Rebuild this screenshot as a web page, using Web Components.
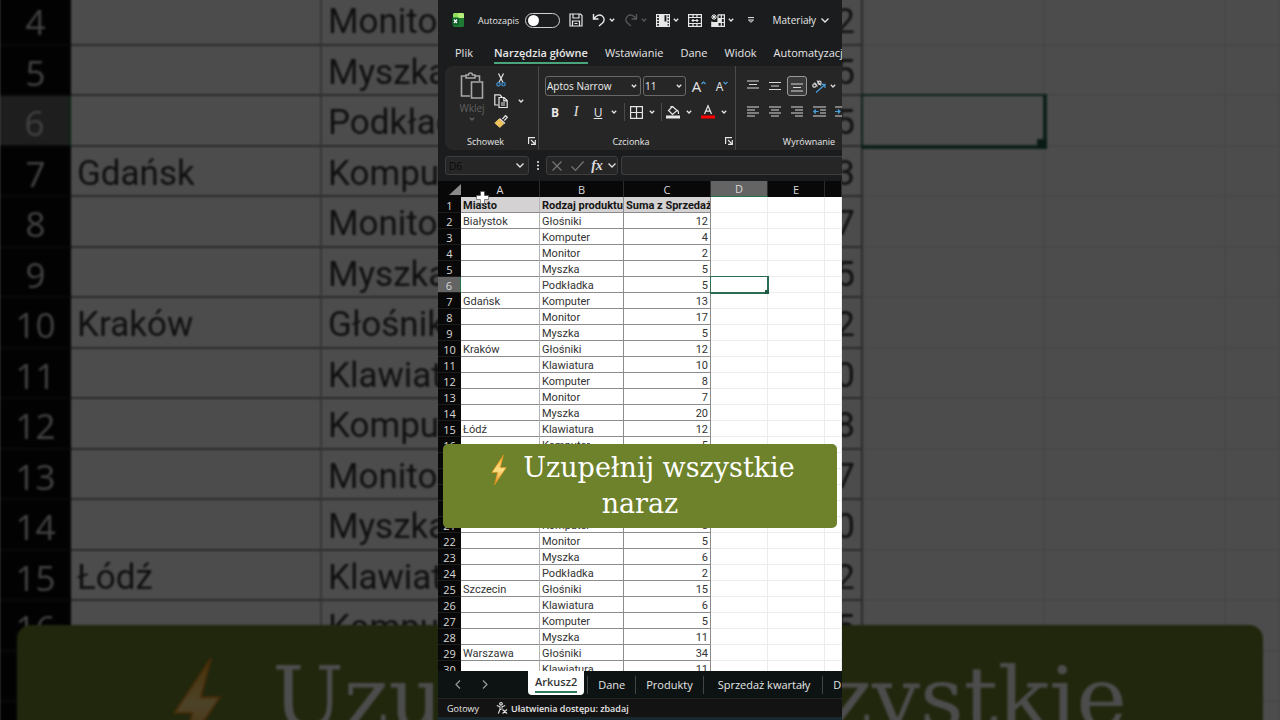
<!DOCTYPE html>
<html lang="pl">
<head>
<meta charset="utf-8">
<title>Arkusz2</title>
<style>
  html, body { margin: 0; height: 100%; background: #000; }
  body { font-family: "Open Sans", "Noto Sans", sans-serif; }
</style>
</head>
<body>
<video-stage>
  <sheet-grid slot="backdrop" first="4" last="18"></sheet-grid>
  <caption-banner slot="backdrop">Uzupełnij wszystkie naraz</caption-banner>
  <excel-window slot="window">
    <title-bar></title-bar>
    <ribbon-tabs></ribbon-tabs>
    <ribbon-panel></ribbon-panel>
    <formula-bar></formula-bar>
    <sheet-grid first="1" last="30" headings></sheet-grid>
    <sheet-tabs></sheet-tabs>
    <status-bar></status-bar>
    <caption-banner slot="caption">Uzupełnij wszystkie naraz</caption-banner>
  </excel-window>
</video-stage>

<script>
const define = (name, css, html) => customElements.define(name, class extends HTMLElement {
  constructor() {
    super();
    this.attachShadow({ mode: "open" });
  }
  connectedCallback() {
    this.shadowRoot.innerHTML = `<style>
      :host, *, *::before, *::after { box-sizing: border-box; }
      button { font: inherit; color: inherit; background: none; border: 0; padding: 0; margin: 0; display: inline-flex; align-items: center; justify-content: center; }
      svg { display: block; flex: none; overflow: visible; }
      a { color: inherit; text-decoration: none; }
      ${css}</style>${typeof html === "function" ? html(this) : html}`;
  }
});

const svg = (w, h, body) =>
  `<svg width="${w}" height="${h}" viewBox="0 0 ${w} ${h}" fill="none" stroke="currentColor" stroke-width="1.2" aria-hidden="true">${body}</svg>`;
const chev = svg(6, 4, `<path d="M.8.8 3 3 5.2.8" stroke-width="1.3"/>`);
const bigChev = svg(8, 5, `<path d="M.5.5 4 4 7.5.5" stroke-width="1.3"/>`);

/* Stage: dimmed enlarged sheet behind, application window in the middle */
define("video-stage", `
  :host { display: grid; grid-template-columns: 1fr minmax(0, 404px) 1fr; grid-template-rows: 100vh; overflow: hidden; }
  .back { grid-area: 1 / 1 / 2 / 4; position: relative; overflow: hidden; filter: brightness(.3); background: #fff;
    --row: 50px; --row-alt: 51px; --font: 35px; --head-font: 35px; --c0: 71px; --ca: 251px; --cb: 270px; --cc: 271px; --cd: 182px; --ce: 181px;
    --pad: 6px; --line: 2px; --sel: 4px; --handle: 10px; --drop: 4px;
    --banner-inset: 17px; --banner-top: 630px; --banner-radius: 14px; --banner-font: 85px; --banner-line: 114px; --banner-pad: 16px; --bolt-w: 50px; --bolt-h: 96px; --bolt-gap: 50px; --bolt-side: 19px; }
  .crop { position: relative; margin-top: -5px; filter: blur(1px); }
  .front { grid-area: 1 / 2 / 2 / 3; position: relative; min-width: 0; }
  `, `<div class="back"><div class="crop"><slot name="backdrop"></slot></div></div><div class="front"><slot name="window"></slot></div>`);

define("excel-window", `
  :host { display: flex; flex-direction: column; height: 100vh; overflow: hidden; position: relative; background: #1b1c1e; color: #e6e6e6; border-bottom: 3px solid #17292e;
    --row: 16px; --row-alt: 16px; --font: 11px; --head-font: 11px; --c0: 23px; --ca: 79px; --cb: 84px; --cc: 87px; --cd: 57px; --ce: 57px;
    --pad: 2px; --line: 1px; --sel: 2px; --handle: 4px; --drop: 1px;
    --banner-inset: 5px; --banner-top: 444px; --banner-radius: 5px; --banner-font: 27px; --banner-line: 36px; --banner-pad: 6px; --bolt-w: 16px; --bolt-h: 30px; --bolt-gap: 16px; --bolt-side: 6px; }
  ::slotted(sheet-grid) { flex: 1; min-height: 0; }
  .pointer { position: absolute; left: 38px; top: 191px; }
  `, `<slot></slot>
  <svg class="pointer" width="13" height="13" viewBox="0 0 13 13" aria-hidden="true"><path d="M4.500 .5h4v4h4v4h-4v4h-4v-4h-4v-4h4z" fill="#fff" stroke="#444" stroke-width=".6"/></svg>
  <slot name="caption"></slot>`);

define("title-bar", `
  :host { display: flex; align-items: center; gap: 9px; height: 40px; padding: 0 13px 0 14px; font-size: 9px; color: #e8e8e8; flex: none; white-space: nowrap; }
  .split { display: flex; align-items: center; gap: 3px; }
  .auto { display: flex; align-items: center; gap: 6px; }
  .brand { width: 17px; }
  input { appearance: none; margin: 0; width: 35px; height: 15px; border: 1px solid #d0d0d0; border-radius: 8px; display: flex; align-items: center; padding: 0 2px; }
  input::before { content: ""; width: 11px; height: 11px; border-radius: 50%; background: #fff; }
  .dim { color: #55575a; }
  .qat { padding: 0 4px; }
  .file { margin-left: auto; gap: 5px; font-size: 10px; }
  `, `
  <span class="brand"><svg width="12" height="14" viewBox="0 0 12 14" aria-hidden="true"><rect x="1" width="11" height="14" rx="1.500" fill="#1f7a34"/><path d="M2.500 0h8A1.500 1.500 0 0 1 12 1.500V5H1V1.500A1.500 1.500 0 0 1 2.500 0z" fill="#8fe05a"/><path d="M6 0h4.500A1.500 1.500 0 0 1 12 1.500V5H6z" fill="#b6ee7c"/><rect y="4.500" width="7" height="7.500" rx="1" fill="#0f5c2b"/><path d="m2 6.500 3 3.500M5 6.500 2 10" stroke="#fff" stroke-width="1.200"/></svg></span>
  <label class="auto">Autozapis <input type="checkbox" role="switch"></label>
  <button aria-label="Zapisz">${svg(14, 14, `<path d="M1 1h10.500L13 2.500V13H1z"/><path d="M4 1v4h6V1M3.500 13V8h7v5M5.500 10.500h3"/>`)}</button>
  <span class="split"><button aria-label="Cofnij">${svg(14, 14, `<path d="M1.500 1v5h5M1.800 5.800C4 2.500 7.500 1 10 2.800c3 2.200 2.500 5.200.5 7.200L7 13" stroke-width="1.400"/>`)}</button><button aria-label="Cofnij, lista">${chev}</button></span>
  <span class="split dim"><button aria-label="Ponów">${svg(14, 14, `<path d="M12.500 1v5h-5M12.200 5.800C10 2.500 6.500 1 4 2.800 1 5 1.500 8 3.500 10L7 13" stroke-width="1.400"/>`)}</button><button aria-label="Ponów, lista">${chev}</button></span>
  <span class="split"><button aria-label="Zablokuj okienka">${svg(14, 13, `<rect x=".6" y=".6" width="12.800" height="11.800"/><path d="M3.500 1v11M1 3.500h2.500M1 6.500h2.500M1 9.500h2.500M11 1v11M11 3.500h2.500M11 6.500h2.500M11 9.500h2.500"/><path d="M3.500 1h5v6.500H11V12H3.500z" fill="currentColor" stroke="none"/>`)}</button><button aria-label="Zablokuj, lista">${chev}</button></span>
  <button aria-label="Scal komórki">${svg(14, 13, `<rect x=".6" y=".6" width="12.800" height="11.800"/><path d="M1 3.500h12M1 9.500h12M5 1v2.500M9 1v2.500M5 9.500V12M9 9.500V12M3.500 6.500h7M5 5v3M9 5v3"/>`)}</button>
  <span class="split"><button aria-label="Wstaw komórki">${svg(14, 13, `<path d="M3 0v6M0 3h6M1 1l4 4M5 1 1 5" stroke-width="1"/><path d="M7 .8h6.400v11.600H.8V7.500M7 .8v11.600M7 4.500h6.400M.8 8.500h12.600M10.300 .8v11.600M3.800 8v4"/><path d="M7 4.500h3v4H7zM1 8.500h6v3.500H1z" fill="currentColor" stroke="none"/>`)}</button><button aria-label="Wstaw, lista">${chev}</button></span>
  <button class="qat" aria-label="Dostosuj pasek">${svg(8, 6, `<path d="M1 .6h6M1.500 3 4 5.300 6.500 3z" stroke-width="1"/>`)}</button>
  <button class="file">Materiały ${bigChev}</button>`);

define("ribbon-tabs", `
  :host { display: block; height: 26px; flex: none; }
  nav { display: flex; gap: 17px; padding: 4px 0 0 17px; font-size: 11px; line-height: 18px; white-space: nowrap; overflow: hidden; }
  a:first-child { padding-right: 4px; }
  .on { font-weight: 600; border-bottom: 2px solid #4aa57c; }
  `, `<nav><a href="#">Plik</a><a href="#" class="on">Narzędzia główne</a><a href="#">Wstawianie</a><a href="#">Dane</a><a href="#">Widok</a><a href="#">Automatyzacja</a></nav>`);

const lines = (...rows) => svg(13, 12, rows.map(([x, w], i) => `<path d="M${x} ${1 + i * 3}h${w}"/>`).join(""));
const launcher = svg(8, 8, `<path d="M.6 7V.6H7M3 3l4 4M7.300 3v4.300H3"/>`);

define("ribbon-group", `
  :host { display: grid; grid-template-rows: 66px 18px; flex: none; }
  :host([divided]) { border-right: 1px solid #4a4a4a; }
  footer { display: grid; grid-template-columns: 1fr 12px; align-items: center; justify-items: center; font-size: 9px; }
  `, el => `<slot></slot><footer><span>${el.getAttribute("label")}</span>${el.hasAttribute("divided") ? `<button aria-label="${el.getAttribute("label")}: ustawienia">${launcher}</button>` : ""}</footer>`);

define("ribbon-panel", `
  :host { display: flex; flex: none; margin-left: 7px; height: 84px; background: #262626; border-radius: 8px 0 0 8px; overflow: hidden; }
  .clip { width: 94px; } .font { width: 197px; } .align { width: 158px; }
  .clipbox { display: grid; grid-template-columns: 30px 28px 12px; grid-template-rows: repeat(3, 21px); padding: 3px 0 0 12px; align-items: center; justify-items: center; }
  .paste { grid-row: 1 / 4; align-self: start; padding-top: 3px; flex-direction: column; gap: 2px; font-size: 10px; line-height: 14px; color: #606060; }
  .paste svg:first-child { color: #a8a8a8; }
  .cut, .copy, .brush { grid-column: 2; } .copy, .more { grid-row: 2; } .more { grid-column: 3; }
  .fontbox { display: grid; grid-template-rows: 20px 20px; gap: 6px; padding: 10px 0 0 6px; align-content: start; }
  .row { display: flex; align-items: center; gap: 2px; }
  .pick { display: grid; align-items: center; border: 1px solid #686868; border-radius: 3px; height: 20px; width: 96px; }
  .pick.size { width: 43px; }
  .pick > * { grid-area: 1 / 1; }
  .pick svg { justify-self: end; margin-right: 3px; pointer-events: none; }
  select { appearance: none; font: 10px "Open Sans", sans-serif; color: #eee; background: none; border: 0; padding: 0 0 0 1px; margin: 0; width: 100%; height: 18px; }
  .grow { width: 22px; font-size: 15px; }
  .shrink { width: 20px; font-size: 12px; }
  .fmt { display: grid; grid-template-columns: 20px 22px 22px 10px 10px 14px 18px 1px 22px 10px 28px 4px; align-items: center; justify-items: center; font-size: 12px; }
  .b { font-weight: 700; } .i { font-family: "Liberation Serif", serif; font-style: italic; font-size: 14px; } .u { text-decoration: underline; }
  .bar { width: 1px; height: 18px; background: #4a4a4a; }
  .alignbox { display: grid; grid-template-columns: repeat(5, 22px); grid-template-rows: 20px 20px; gap: 6px 0; padding: 10px 0 0 6px; align-content: start; align-items: center; justify-items: center; color: #d8d8d8; }
  .on { border: 1px solid #9a9a9a; border-radius: 3px; width: 20px; height: 20px; background: #3a3a3a; }
  .orient { gap: 4px; grid-column: 4 / 6; justify-self: start; padding-left: 4px; }
  `, `
  <ribbon-group class="clip" label="Schowek" divided><div class="clipbox">
    <button class="paste">${svg(24, 27, `<path d="M10 24H1.500V4H6M15 4h4.500v5" stroke-width="1.600"/><path d="M6 6V3h2.500a2 2 0 0 1 4 0H15v3zM11.500 10H22.500v16H11.500z" stroke-width="1.600"/>`)}<span>Wklej</span>${chev}</button>
    <button class="cut" aria-label="Wytnij">${svg(10, 14, `<path d="M2.500.5 7 9.500M7.500.5 3 9.500"/><circle cx="2.500" cy="11.300" r="1.700" stroke="#3f8fcf"/><circle cx="7.500" cy="11.300" r="1.700" stroke="#3f8fcf"/>`)}</button>
    <button class="copy" aria-label="Kopiuj">${svg(14, 14, `<path d="M4.500 11H.8V.8h5L8 3"/><path d="M5 3.500h5L13.200 6.500v7H5zM9.800 3.800v3h3M7 9h4M7 11h4"/>`)}</button>
    <button class="more" aria-label="Kopiuj, lista">${chev}</button>
    <button class="brush" aria-label="Malarz formatów">${svg(14, 13, `<path d="m8.500 4 3-3.300 1.800 1.600-3 3.200M5.500 3.500l5.500 5"/><path d="M5 4 .8 8l5 4.500L10 8.500z" fill="#eec35a" stroke="#e8c57a" stroke-width=".8"/>`)}</button>
  </div></ribbon-group>
  <ribbon-group class="font" label="Czcionka" divided><div class="fontbox">
    <div class="row">
      <span class="pick"><select aria-label="Czcionka"><option>Aptos Narrow</option></select>${chev}</span>
      <span class="pick size"><select aria-label="Rozmiar"><option>11</option></select>${chev}</span>
      <button class="grow" aria-label="Zwiększ">A${svg(5, 10, `<path d="m.5 3 2-2 2 2" stroke="#4aa0dc"/>`)}</button>
      <button class="shrink" aria-label="Zmniejsz">A${svg(5, 10, `<path d="m.5 1 2 2 2-2" stroke="#4aa0dc"/>`)}</button>
    </div>
    <div class="fmt">
      <button class="b">B</button><button class="i">I</button><button class="u">U</button><button aria-label="Podkreślenie">${chev}</button><span class="bar"></span>
      <button aria-label="Obramowanie">${svg(13, 13, `<path d="M.6.6h11.800v11.800H.6zM6.500.6v11.800M.6 6.500h11.800"/>`)}</button><button aria-label="Obramowanie, lista">${chev}</button><span class="bar"></span>
      <button aria-label="Wypełnienie">${svg(14, 14, `<path d="m6.500 1.500 4.500 4-4.500 4-4-4zM5 4V1M11 5c2 1 1.500 3 1.500 4"/><path d="M0 10.500h14v3H0z" fill="#e8e8e8" stroke="none"/>`)}</button><button aria-label="Wypełnienie, lista">${chev}</button>
      <button aria-label="Kolor czcionki">${svg(14, 14, `<path d="M3.500 9 7 .8 10.500 9M4.700 6.200h4.600"/><path d="M0 10.500h14v3H0z" fill="#f00" stroke="none"/>`)}</button><button aria-label="Kolor, lista">${chev}</button>
    </div>
  </div></ribbon-group>
  <ribbon-group class="align" label="Wyrównanie"><div class="alignbox">
    <button aria-label="Do góry">${svg(12, 12, `<path d="M0 1h12M2 4.500h8M0 8h12"/>`)}</button>
    <button aria-label="Do środka w pionie">${svg(12, 12, `<path d="M0 2.500h12M2 6h8M0 9.500h12"/>`)}</button>
    <button class="on" aria-label="Do dołu">${svg(12, 12, `<path d="M0 4h12M2 7.500h8M0 11h12"/>`)}</button>
    <button class="orient" aria-label="Orientacja">${svg(14, 13, `<circle cx="2.500" cy="5.500" r="1.700"/><path d="m2.500 2.500 3 4M5 .5l4 5"/><circle cx="7.500" cy="2.800" r="1.600"/><path d="m4 12.500 9-8M9.500 4.300H13V8" stroke="#4aa0dc"/>`)}${chev}</button>
    <button aria-label="Do lewej">${lines([0, 12], [0, 8], [0, 12], [0, 8])}</button>
    <button aria-label="Do środka">${lines([0, 12], [2, 8], [0, 12], [2, 8])}</button>
    <button aria-label="Do prawej">${lines([0, 12], [4, 8], [0, 12], [4, 8])}</button>
    <button aria-label="Zmniejsz wcięcie">${svg(13, 12, `<path d="M0 1h13M7 4h6M7 7h6M0 10h13"/><path d="M5.500 5.500H.8M2.800 3.500l-2 2 2 2" stroke="#4aa0dc"/>`)}</button>
    <button aria-label="Zwiększ wcięcie">${svg(13, 12, `<path d="M0 1h13M7 4h6M7 7h6M0 10h13"/><path d="M0 5.500h5M3 3.500l2 2-2 2" stroke="#4aa0dc"/>`)}</button>
  </div></ribbon-group>`);

define("formula-bar", `
  :host { display: grid; grid-template-columns: 84px 17px 72px 1fr; flex: none; height: 31px; padding: 6px 0 6px 7px; }
  .box { display: flex; align-items: center; height: 19px; border: 1px solid #3e3e3e; border-radius: 3px; background: #262626; min-width: 0; }
  .name { padding-right: 4px; }
  .tools { display: grid; grid-template-columns: 20px 20px 20px 10px; justify-items: center; color: #777; }
  .tools button:nth-child(n + 3) { color: #ddd; }
  .fx { font: italic 700 14px "Liberation Serif", serif; }
  .dots { display: grid; place-items: center; }
  .long { margin-left: 3px; border-right: 0; border-radius: 3px 0 0 3px; }
  input { width: 100%; min-width: 0; border: 0; background: none; padding: 0 3px; margin: 0; font: 10px "Open Sans", sans-serif; color: #0a0a0a; outline: 0; }
  `, `
  <span class="box name"><input aria-label="Pole nazwy" value="D6">${bigChev}</span>
  <span class="dots">${svg(2, 9, `<path d="M0 1h2M0 4.500h2M0 8h2" stroke-width="1.600"/>`)}</span>
  <span class="box tools"><button aria-label="Anuluj">${svg(10, 10, `<path d="m.5.5 9 9M9.500.5l-9 9"/>`)}</button><button aria-label="Wprowadź">${svg(13, 10, `<path d="m.5 5.500 4 4 8-9"/>`)}</button><button class="fx">fx</button><button aria-label="Funkcje">${bigChev}</button></span>
  <span class="box long"><input aria-label="Pasek formuły"></span>`);

const DATA = {
  1: ["Miasto", "Rodzaj produktu", "Suma z Sprzedaż"],
  2: ["Białystok", "Głośniki", 12], 3: ["", "Komputer", 4], 4: ["", "Monitor", 2], 5: ["", "Myszka", 5], 6: ["", "Podkładka", 5],
  7: ["Gdańsk", "Komputer", 13], 8: ["", "Monitor", 17], 9: ["", "Myszka", 5],
  10: ["Kraków", "Głośniki", 12], 11: ["", "Klawiatura", 10], 12: ["", "Komputer", 8], 13: ["", "Monitor", 7], 14: ["", "Myszka", 20],
  15: ["Łódź", "Klawiatura", 12], 16: ["", "Komputer", 5], 21: ["", "Komputer", 8], 22: ["", "Monitor", 5], 23: ["", "Myszka", 6], 24: ["", "Podkładka", 2],
  25: ["Szczecin", "Głośniki", 15], 26: ["", "Klawiatura", 6], 27: ["", "Komputer", 5], 28: ["", "Myszka", 11],
  29: ["Warszawa", "Głośniki", 34], 30: ["", "Klawiatura", 11]
};

define("sheet-grid", `
  :host { display: block; overflow: hidden; background: #fff; }
  table { table-layout: fixed; width: 100%; border-collapse: separate; border-spacing: 0; font-size: var(--font); color: #333; }
  .c0 { width: var(--c0); } .ca { width: var(--ca); } .cb { width: var(--cb); } .cc { width: var(--cc); } .cd { width: var(--cd); } .ce { width: var(--ce); }
  tr { height: var(--row); }
  tbody tr:nth-child(odd) { height: var(--row-alt); }
  th, td { padding: 0; line-height: 1; white-space: nowrap; overflow: hidden; }
  td { font-family: Roboto, sans-serif; padding: var(--drop) var(--pad) 0; border-right: var(--line) solid #ececec; border-bottom: var(--line) solid #ececec; }
  td.t { border-color: #8c8c8c; }
  td:nth-child(2) { border-right-color: #b4b4b4; }
  td.n { text-align: right; }
  tr.first td.t { background: #d4d2d2; font-weight: 700; color: #161616; }
  th { background: #080808; color: #d8d8d8; font-size: var(--head-font); font-weight: 400; text-align: center; }
  tbody th { border-bottom: var(--line) solid #1c1c1c; padding-top: var(--drop); }
  thead th + th { border-right: 1px solid #2c2c2c; }
  th.sel { background: #646464; }
  thead th.sel { border-bottom: 1px solid #217346; }
  tbody th.sel { border-right: var(--line) solid #217346; }
  thead svg { margin-left: auto; }
  td.active { position: relative; overflow: visible; box-shadow: 0 0 0 var(--line) #2b6b52; border-color: #2b6b52; }
  td.active::after { content: ""; position: absolute; right: calc(-1 * var(--sel)); bottom: calc(-1 * var(--sel)); width: var(--handle); height: var(--handle); background: #1d5c42; }
  `, el => {
    const from = +el.getAttribute("first"), to = +el.getAttribute("last");
    const rows = [];
    for (let r = from; r <= to; r++) {
      const d = DATA[r] || ["", "", ""];
      rows.push(`<tr class="${r === 1 ? "first" : ""}"><th scope="row" class="${r === 6 ? "sel" : ""}">${DATA[r] ? r : ""}</th><td class="t">${d[0]}</td><td class="t">${d[1]}</td><td class="t n">${d[2]}</td><td class="${r === 6 ? "active" : ""}"></td><td></td><td></td></tr>`);
    }
    const head = el.hasAttribute("headings")
      ? `<thead><tr><th>${svg(12, 11, `<path d="M12 0v11H0z" fill="#8a8a8a" stroke="none"/>`)}</th>${"ABCDE".split("").map(c => `<th scope="col" class="${c === "D" ? "sel" : ""}">${c}</th>`).join("")}<th></th></tr></thead>` : "";
    return `<table><colgroup><col class="c0"><col class="ca"><col class="cb"><col class="cc"><col class="cd"><col class="ce"><col></colgroup>${head}<tbody>${rows.join("")}</tbody></table>`;
  });

define("sheet-tabs", `
  :host { display: flex; flex: none; height: 27px; background: #0d1313; font-size: 11px; line-height: 18px; white-space: nowrap; overflow: hidden; }
  .nav { display: flex; align-items: center; gap: 21px; padding: 0 40px 0 17px; color: #999; }
  nav { display: flex; align-items: center; }
  a { padding: 0 10px; border-left: 1px solid #444; }
  .on { align-self: start; height: 24px; background: #fff; color: #333; font-weight: 600; padding: 2px 7px 0; margin-right: 3px; border: 0; border-radius: 0 0 4px 4px; }
  .on span { display: block; border-bottom: 2px solid #2f7a5c; }
  .wide { padding: 0 12px 0 14px; }
  `, `<div class="nav"><button aria-label="Poprzedni">${svg(6, 9, `<path d="M5 .5 1 4.500l4 4"/>`)}</button><button aria-label="Następny">${svg(6, 9, `<path d="m1 .5 4 4-4 4"/>`)}</button></div>
  <nav><a href="#" class="on"><span>Arkusz2</span></a><a href="#">Dane</a><a href="#">Produkty</a><a href="#" class="wide">Sprzedaż kwartały</a><a href="#">D</a></nav>`);

define("status-bar", `
  :host { display: flex; align-items: center; flex: none; height: 19px; padding-left: 9px; gap: 17px; font-size: 9px; background: #131313; border-top: 1px solid #242424; white-space: nowrap; }
  button { gap: 3px; font-weight: 600; }
  `, `<span>Gotowy</span><button>${svg(12, 12, `<circle cx="5" cy="1.800" r="1.300"/><path d="M.8 3.500 4 4.800v2.700L2.300 11.500M9.200 3.500 6 4.800v2M4 7.500h1.500M6.500 7.500l4.500 4M11 7.500l-4.500 4" stroke-width="1.100"/>`)} Ułatwienia dostępu: zbadaj</button>`);

define("caption-banner", `
  :host { position: absolute; left: var(--banner-inset); right: var(--banner-inset); top: var(--banner-top); display: block; background: #6d822b; border-radius: var(--banner-radius);
    padding: var(--banner-pad) 0; text-align: center; color: #fff; font: var(--banner-font)/var(--banner-line) "DejaVu Serif", serif; }
  p { margin: 0 auto; width: 84%; }
  svg { display: inline-block; width: var(--bolt-w); height: var(--bolt-h); vertical-align: middle; margin: 0 var(--bolt-gap) 0 var(--bolt-side); }
  `, `<p><svg viewBox="0 0 16 30" role="img" aria-label="⚡"><defs><linearGradient id="g" x1="0" y1="0" x2="0" y2="1"><stop offset="0" stop-color="#f7a823"/><stop offset=".5" stop-color="#ffdf86"/><stop offset="1" stop-color="#e8860c"/></linearGradient></defs><path d="M12.500 0 .8 17.500h5.700L3.500 30 15.300 12.500H9.200z" fill="url(#g)" stroke="#e6921c" stroke-width=".6"/></svg><slot></slot></p>`);
</script>
</body>
</html>
